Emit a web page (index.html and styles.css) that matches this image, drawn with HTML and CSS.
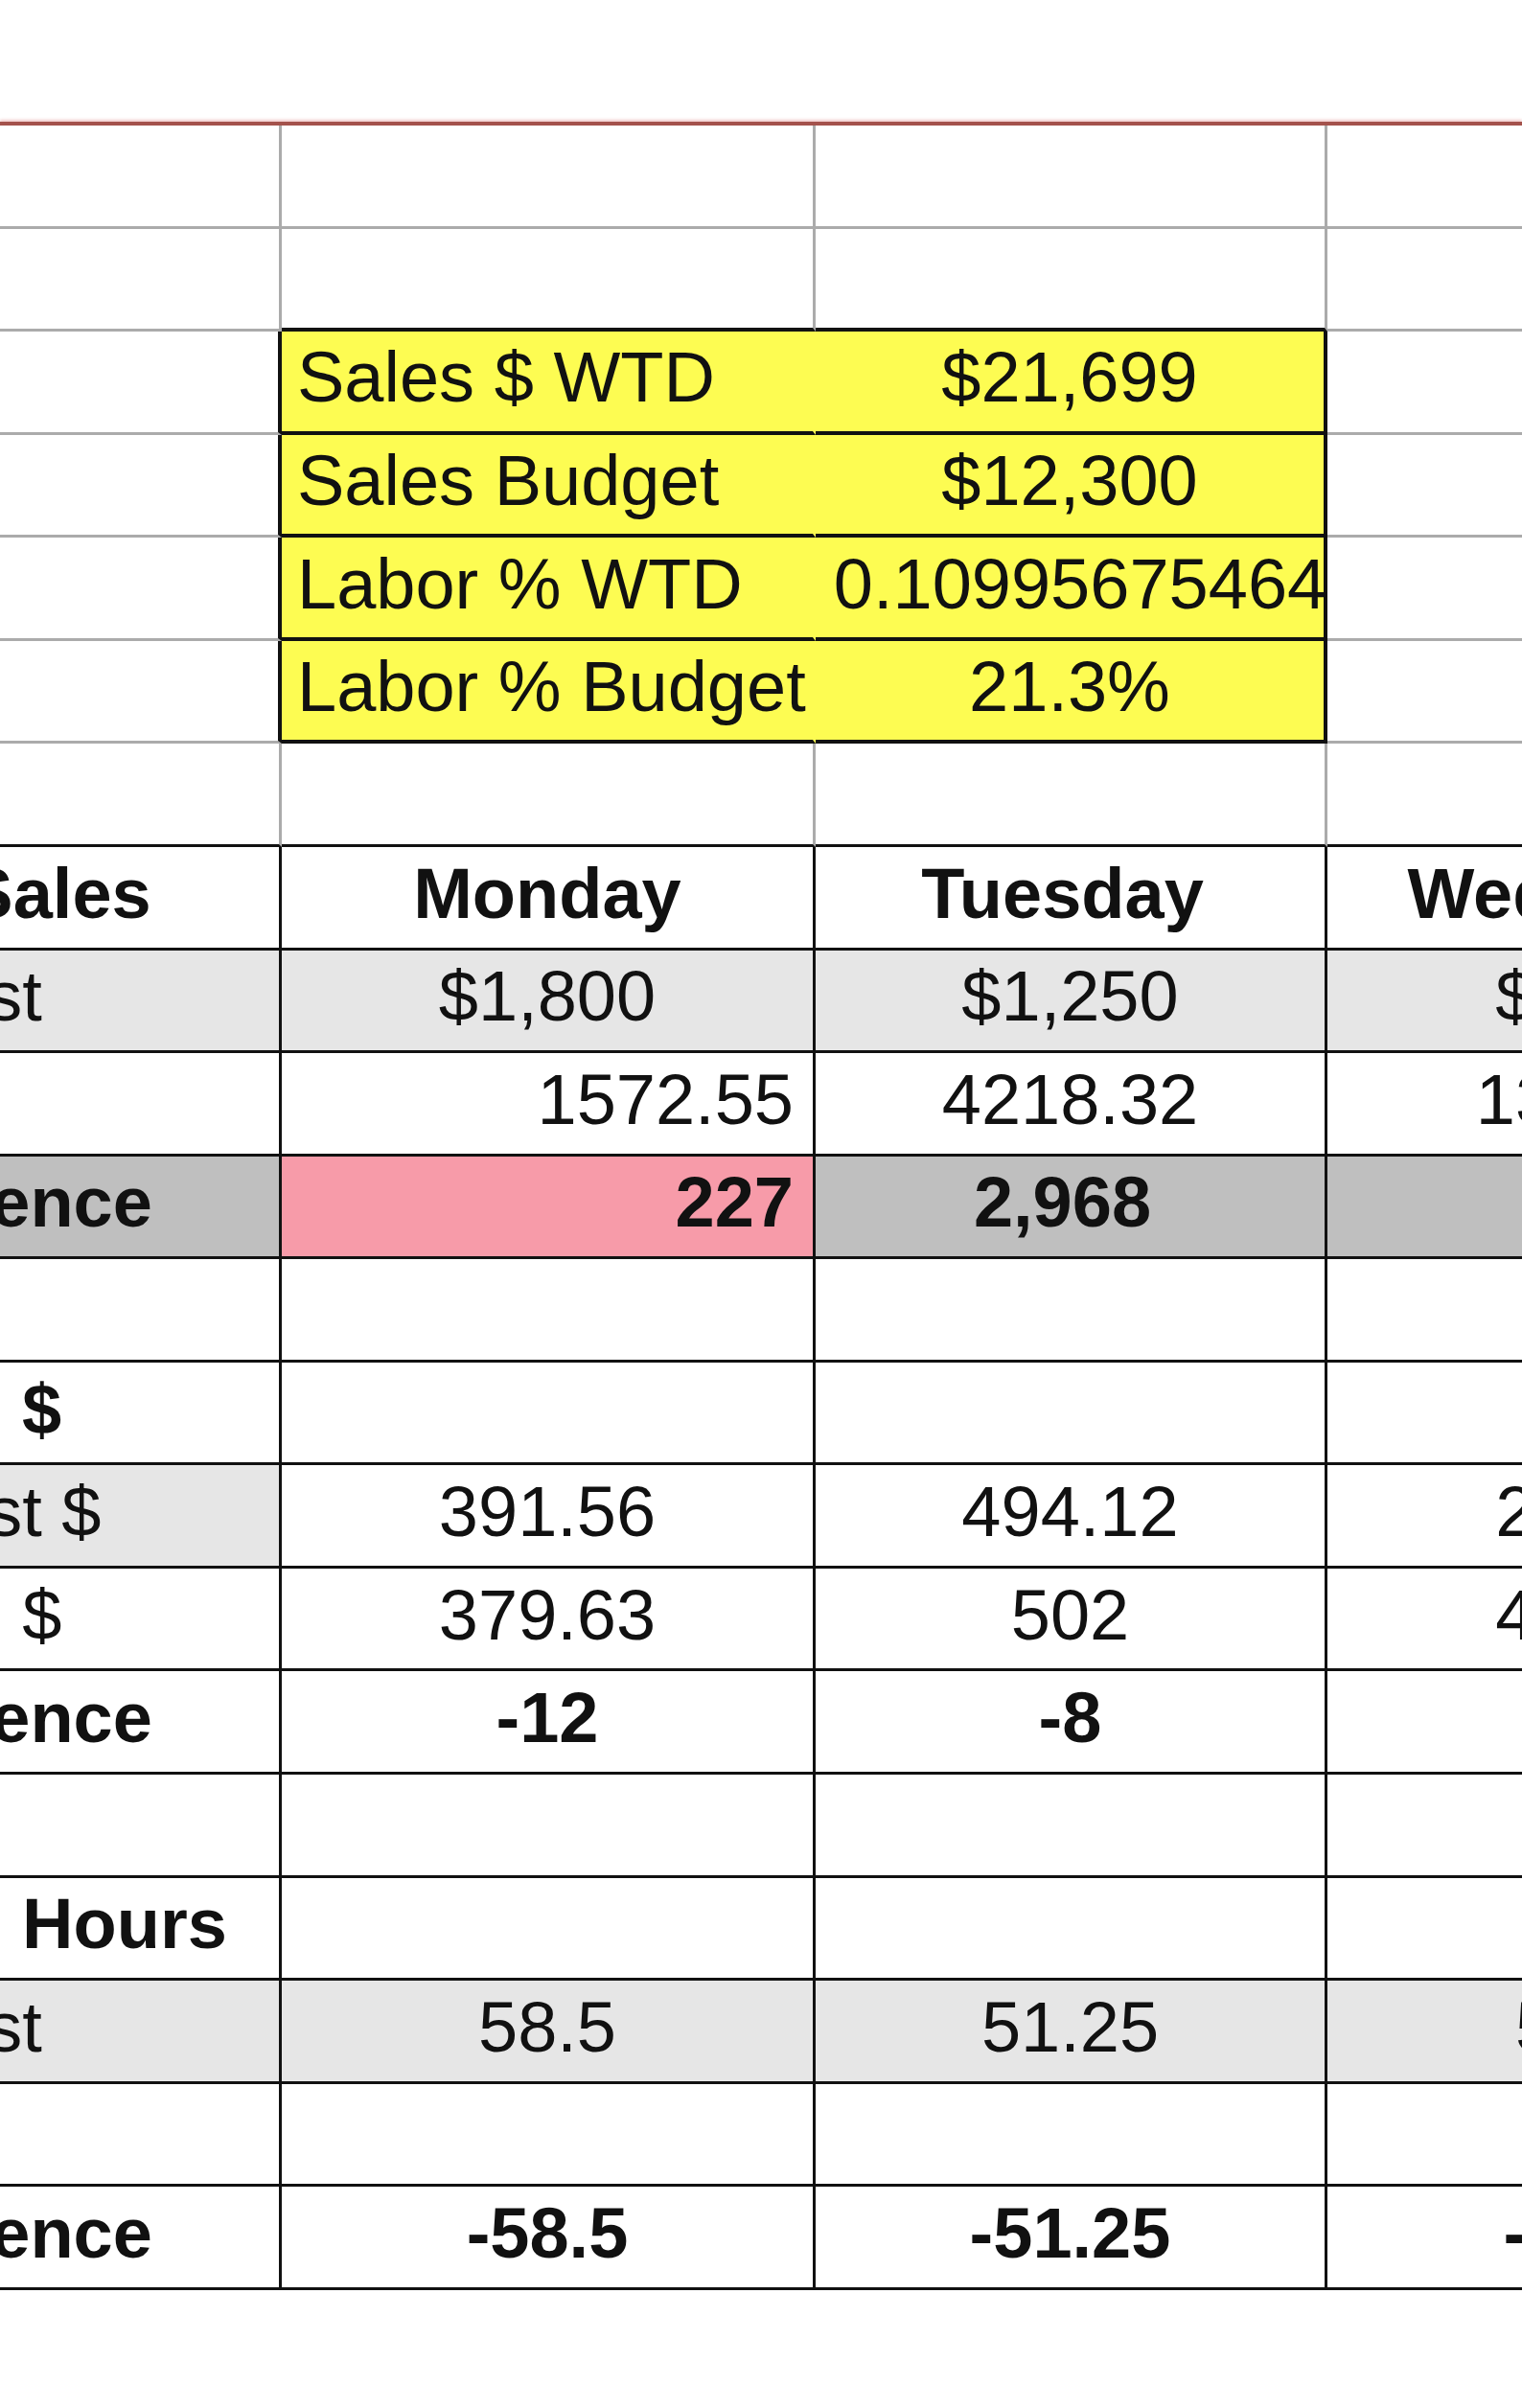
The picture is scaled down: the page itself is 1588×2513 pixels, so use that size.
FILE: index.html
```html
<!DOCTYPE html>
<html lang="en">
<head>
<meta charset="utf-8">
<title>Weekly Sales &amp; Labor</title>
<link rel="stylesheet" href="styles.css">
</head>
<body>
<div class="viewport">
  <div class="freeze-line"></div>
  <div class="sheet">
    <!-- row 1 -->
    <div class="cell gl"></div><div class="cell gl"></div><div class="cell gl"></div><div class="cell gl"></div>
    <!-- row 2 -->
    <div class="cell gl"></div><div class="cell gl box-top"></div><div class="cell gl box-top"></div><div class="cell gl"></div>
    <!-- summary box -->
    <div class="cell gl box-left"></div><div class="cell kv-label">Sales $ WTD</div><div class="cell kv-value">$21,699</div><div class="cell gl"></div>
    <div class="cell gl box-left"></div><div class="cell kv-label">Sales Budget</div><div class="cell kv-value">$12,300</div><div class="cell gl"></div>
    <div class="cell gl box-left"></div><div class="cell kv-label">Labor % WTD</div><div class="cell kv-value long">0.10995675464</div><div class="cell gl"></div>
    <div class="cell gl box-left"></div><div class="cell kv-label">Labor % Budget</div><div class="cell kv-value">21.3%</div><div class="cell gl"></div>
    <!-- row 7 -->
    <div class="cell gl table-top"></div><div class="cell gl table-top"></div><div class="cell gl table-top"></div><div class="cell gl table-top"></div>

    <!-- Sales -->
    <div class="cell label bold sales-gap">Day Sales</div><div class="cell ctr bold">Monday</div><div class="cell ctr bold nudge">Tuesday</div><div class="cell ctr bold">Wednesday</div>
    <div class="cell label light">Forcast</div><div class="cell ctr light">$1,800</div><div class="cell ctr light">$1,250</div><div class="cell ctr light">$1,400</div>
    <div class="cell label">Actual</div><div class="cell rt">1572.55</div><div class="cell ctr">4218.32</div><div class="cell ctr">1348.76</div>
    <div class="cell label bold dark">Difference</div><div class="cell rt bold pink">227</div><div class="cell ctr bold dark nudge">2,968</div><div class="cell dark"></div>
    <div class="cell label"></div><div class="cell"></div><div class="cell"></div><div class="cell"></div>

    <!-- Labor $ -->
    <div class="cell label bold labor-gap">Labor $</div><div class="cell"></div><div class="cell"></div><div class="cell"></div>
    <div class="cell label light">Forcast $</div><div class="cell ctr">391.56</div><div class="cell ctr">494.12</div><div class="cell ctr">262.44</div>
    <div class="cell label">Actual $</div><div class="cell ctr">379.63</div><div class="cell ctr">502</div><div class="cell ctr">431.05</div>
    <div class="cell label bold">Difference</div><div class="cell ctr bold">-12</div><div class="cell ctr bold">-8</div><div class="cell"></div>
    <div class="cell label"></div><div class="cell"></div><div class="cell"></div><div class="cell"></div>

    <!-- Labor Hours -->
    <div class="cell label bold labor-gap">Labor Hours</div><div class="cell"></div><div class="cell"></div><div class="cell"></div>
    <div class="cell label light">Forcast</div><div class="cell ctr light">58.5</div><div class="cell ctr light">51.25</div><div class="cell ctr light">57.75</div>
    <div class="cell label">Actual</div><div class="cell"></div><div class="cell"></div><div class="cell"></div>
    <div class="cell label bold">Difference</div><div class="cell ctr bold">-58.5</div><div class="cell ctr bold">-51.25</div><div class="cell ctr bold">-57.75</div>
  </div>
</div>
</body>
</html>
```
FILE: styles.css
```css
html, body {
  margin: 0;
  padding: 0;
  background: #ffffff;
}

body {
  width: 1588px;
  height: 2513px;
  overflow: hidden;
  font-family: "Liberation Sans", Arial, Helvetica, sans-serif;
  font-size: 74px;
  color: #111111;
}

.viewport {
  width: 1588px;
  overflow: hidden;
  padding-top: 127px;
}

.freeze-line {
  height: 4px;
  background: #a4524c;
  box-shadow: 0 -2px 3px rgba(230, 150, 150, 0.5);
}

.sheet {
  margin-left: -213px;
  width: max-content;
  display: grid;
  grid-template-columns: 507px 557px 534px 580px;
  grid-auto-rows: 107.57px;
}

.cell {
  box-sizing: border-box;
  display: flex;
  align-items: center;
  padding-bottom: 8px;
  white-space: nowrap;
  border-right: 3px solid #111111;
  border-bottom: 3px solid #111111;
  background: #ffffff;
}

/* light spreadsheet gridlines above the table */
.gl {
  border-right-color: #ababab;
  border-bottom-color: #ababab;
}

.table-top {
  border-bottom-color: #111111;
}

/* yellow summary box */
.box-top {
  border-bottom: 4px solid #111111;
}

.box-left {
  border-right: 4px solid #111111;
}

.kv-label,
.kv-value {
  background: #fdfc52;
  border-bottom: 4px solid #111111;
}

.kv-label {
  border-right-color: transparent;
  padding-left: 16px;
}

.kv-value {
  justify-content: center;
  border-right: 4px solid #111111;
}

.kv-value.long {
  padding-left: 22px;
}

/* data table */
.label {
  padding-left: 10px;
}

.sales-gap {
  word-spacing: 11px;
}

.labor-gap {
  text-indent: -14px;
  word-spacing: 14px;
}

.ctr {
  justify-content: center;
}

.nudge {
  padding-right: 16px;
}

.rt {
  justify-content: flex-end;
  padding-right: 20px;
}

.bold {
  font-weight: 700;
}

.light {
  background: #e6e6e6;
}

.dark {
  background: #bfbfbf;
}

.pink {
  background: #f79ba9;
}
```
